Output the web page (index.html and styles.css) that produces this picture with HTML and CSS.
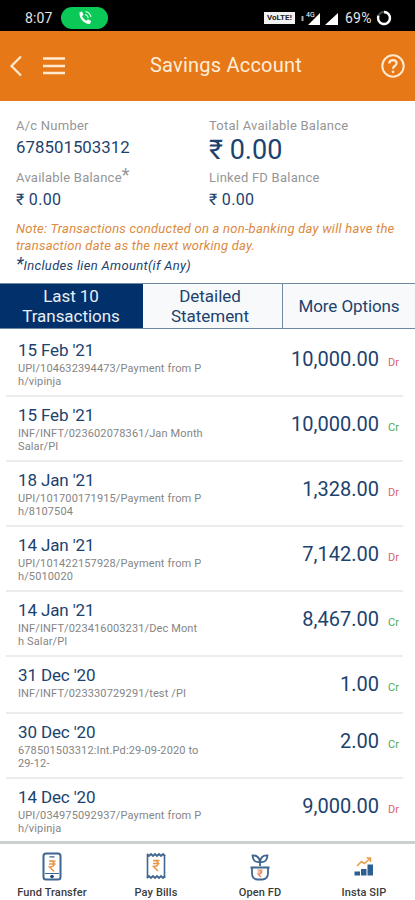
FILE: index.html
```html
<!DOCTYPE html>
<html lang="en">
<head>
<meta charset="utf-8">
<title>Savings Account</title>
<link rel="stylesheet" href="styles.css">
</head>
<body>
<div class="status">
  <span class="clock">8:07</span>
  <span class="call"><svg width="16" height="16" viewBox="0 0 16 16"><path d="M2.5 2.2 L5 1.5 L6.5 4.8 L5 6.2 Q6.5 9 9.4 10.7 L11 9.2 L14 10.9 L13.3 13.6 Q11 15 7 12 Q2 8 2.5 2.2Z" fill="#fff"/><path d="M8 4.5 Q10.5 5 11.3 8 M8.5 1.5 Q13 2.5 14 7" fill="none" stroke="#d8ffe4" stroke-width="1.2"/></svg></span>
  <span class="volte">VoLTE⁞</span>
  <svg class="signals" width="38" height="15" viewBox="0 0 38 15"><path d="M1.5 5v5" stroke="#aaa" stroke-width="2"/><path d="M19 2v12H7z M37 2v12H24z" fill="#fff"/><text x="5" y="6" font-size="7" fill="#fff">4G</text></svg>
  <span class="percent">69%</span>
  <svg class="battery" width="16" height="16" viewBox="0 0 16 16"><circle cx="8" cy="8" r="6" fill="none" stroke="#444" stroke-width="2.4"/><path d="M8 2a6 6 0 1 1-5.6 3.8" fill="none" stroke="#fff" stroke-width="2.4"/></svg>
</div>
<header class="header">
  <svg class="back" width="14" height="22" viewBox="0 0 14 22"><path d="M12 1.5 L2.5 11 L12 20.500" fill="none" stroke="#ffe9cf" stroke-width="2.2"/></svg>
  <svg class="menu" width="24" height="20" viewBox="0 0 24 20"><path d="M1 2.500h22M1 10h22M1 17h22" stroke="#ffe9cf" stroke-width="2.3"/></svg>
  <h1>Savings Account</h1>
  <svg class="help" width="26" height="26" viewBox="0 0 26 26"><circle cx="13" cy="13" r="10.700" fill="none" stroke="#ffe9cf" stroke-width="2"/><path d="M9.300 10.500 Q9.500 7.200 13 7.200 Q16.600 7.300 16.600 10.300 Q16.500 12 14.500 13.200 Q13 14.200 13 15.800" fill="none" stroke="#ffe9cf" stroke-width="2.300"/><circle cx="13" cy="18.800" r="1.400" fill="#ffe9cf"/></svg>
</header>
<section class="summary">
  <div class="balances">
    <div class="label">A/c Number</div><div class="label">Total Available Balance</div>
    <div class="value acct">678501503312</div><div class="value total">₹ 0.00</div>
    <div class="label">Available Balance<span class="star">*</span></div><div class="label">Linked FD Balance</div>
    <div class="value small">₹ 0.00</div><div class="value small">₹ 0.00</div>
  </div>
  <p class="note">Note: Transactions conducted on a non-banking day will have the<br>transaction date as the next working day.</p>
  <p class="lien"><span class="lien-star">*</span>Includes lien Amount(if Any)</p>
</section>
<nav class="tabs">
  <div class="tab active">Last 10<br>Transactions</div>
  <div class="tab">Detailed<br>Statement</div>
  <div class="tab single">More Options</div>
</nav>
<main class="list">
  <div class="row"><div class="info"><div class="date">15 Feb '21</div><div class="desc">UPI/104632394473/Payment from P<br>h/vipinja</div></div><div class="amount">10,000.00</div><div class="kind dr">Dr</div></div>
  <div class="row"><div class="info"><div class="date">15 Feb '21</div><div class="desc">INF/INFT/023602078361/Jan Month<br>Salar/PI</div></div><div class="amount">10,000.00</div><div class="kind cr">Cr</div></div>
  <div class="row"><div class="info"><div class="date">18 Jan '21</div><div class="desc">UPI/101700171915/Payment from P<br>h/8107504</div></div><div class="amount">1,328.00</div><div class="kind dr">Dr</div></div>
  <div class="row"><div class="info"><div class="date">14 Jan '21</div><div class="desc">UPI/101422157928/Payment from P<br>h/5010020</div></div><div class="amount">7,142.00</div><div class="kind dr">Dr</div></div>
  <div class="row"><div class="info"><div class="date">14 Jan '21</div><div class="desc">INF/INFT/023416003231/Dec Mont<br>h Salar/PI</div></div><div class="amount">8,467.00</div><div class="kind cr">Cr</div></div>
  <div class="row short"><div class="info"><div class="date">31 Dec '20</div><div class="desc">INF/INFT/023330729291/test /PI</div></div><div class="amount">1.00</div><div class="kind cr">Cr</div></div>
  <div class="row"><div class="info"><div class="date">30 Dec '20</div><div class="desc">678501503312:Int.Pd:29-09-2020 to<br>29-12-</div></div><div class="amount">2.00</div><div class="kind cr">Cr</div></div>
  <div class="row last"><div class="info"><div class="date">14 Dec '20</div><div class="desc">UPI/034975092937/Payment from P<br>h/vipinja</div></div><div class="amount">9,000.00</div><div class="kind dr">Dr</div></div>
</main>
<footer class="bottom">
  <div class="item"><svg width="30" height="32" viewBox="0 0 30 32"><rect x="6.500" y="2.500" width="17" height="26" rx="2.500" fill="#fff" stroke="#3f6690" stroke-width="2"/><path d="M12.500 5.800h5M8 22.500h14" stroke="#3f6690" stroke-width="1.200"/><circle cx="15" cy="25.500" r="1.800" fill="#1d4775"/><path d="M12 10h6.500M12 13h6.500M12.500 10q4.500 0 4.500 3t-4.500 3l4.500 4.500" fill="none" stroke="#ec9440" stroke-width="1.500"/></svg><span>Fund Transfer</span></div>
  <div class="item"><svg width="30" height="32" viewBox="0 0 30 32"><path d="M6.500 4v23M23.500 4v23" stroke="#3f6690" stroke-width="1.600"/><path d="M6 3l2 2 2-2 2 2 2-2 2 2 2-2 2 2 2-2 2 2M6 27l2-2 2 2 2-2 2 2 2-2 2 2 2-2 2 2 2-2" fill="none" stroke="#3f6690" stroke-width="1.800"/><path d="M12 9.500h6.500M12 12.500h6.500M12.500 9.500q4.500 0 4.500 3t-4.500 3l4.500 4.500" fill="none" stroke="#ec9440" stroke-width="1.500"/></svg><span>Pay Bills</span></div>
  <div class="item"><svg width="30" height="32" viewBox="0 0 30 32"><path d="M15 15V11Q8 12 7.500 4.500Q14 4 15 11Q16 4 22.500 4.500Q22 12 15 11M5.500 16.500h19M7 17v5q0 6 5.500 6.500h5q5.500-.5 5.500-6.500v-5" fill="none" stroke="#3f6690" stroke-width="1.800"/><path d="M12.500 19h5M12.500 21h5M13 19q3.500 0 3.500 2t-3.500 2l3 3" fill="none" stroke="#ec8350" stroke-width="1.200"/></svg><span>Open FD</span></div>
  <div class="item"><svg width="30" height="32" viewBox="0 0 30 32"><path d="M5.500 20.500h5.500v4H5.500zM12 18h5.500v6.500h-5.500zM18.500 13.500h5.500V24.500H18.500z" fill="#2d5f91"/><path d="M8 15l4.500-4.500 3 2 6-5.500M17.500 7h4v4" fill="none" stroke="#e9a04b" stroke-width="1.600"/></svg><span>Insta SIP</span></div>
</footer>
</body>
</html>
```

FILE: styles.css
```css
* { box-sizing: border-box; }
body { margin: 0; width: 415px; height: 900px; overflow: hidden; background: #fff; font-family: Roboto, "Liberation Sans", sans-serif; color: #1c426e; display: flex; flex-direction: column; }
h1, p { margin: 0; font-weight: 400; }
.status { height: 31px; flex: none; background: #000; color: #e4e4e4; display: flex; align-items: center; padding: 5px 24px 0 25px; }
.clock { width: 36px; font-size: 14px; letter-spacing: 0.1px; }
.call { width: 47px; height: 22px; border-radius: 11px; background: #0bc957; display: flex; align-items: center; justify-content: center; }
.volte { margin-left: 156px; width: 31px; height: 12px; background: #f2f2f2; color: #222; font-size: 8px; font-weight: 700; line-height: 12px; text-align: center; }
.signals { margin-left: 6px; }
.percent { margin-left: 6px; width: 31px; font-size: 14px; letter-spacing: 0.2px; }
.battery { flex: none; margin-right: -9px; }
.header { height: 70px; flex: none; background: #e67817; color: #ffedda; display: flex; align-items: center; padding: 0 9px; }
.header svg { flex: none; }
.menu { margin-left: 19px; }
.header h1 { flex: 1; padding: 0 0 2px 84px; font-size: 20px; letter-spacing: 0.22px; white-space: nowrap; }
.summary { height: 182px; flex: none; padding: 16px 0 0 16px; }
.balances { display: grid; grid-template-columns: 193px 1fr; grid-template-rows: 17px 35px 17px 26px; white-space: nowrap; }
.label { font-size: 13px; line-height: 17px; color: #969696; letter-spacing: 0.24px; }
.star { font-size: 18px; line-height: 0; vertical-align: 1px; }
.value.acct { font-size: 16.800px; line-height: 27px; letter-spacing: 0.05px; }
.value.total { font-size: 27px; line-height: 33px; }
.value.small { font-size: 16px; line-height: 27px; letter-spacing: 0.3px; }
.note { margin-top: 9px; font-size: 13px; line-height: 16.500px; font-style: italic; color: #dc8a3d; white-space: nowrap; letter-spacing: 0.24px; }
.lien { font-size: 13px; font-style: italic; line-height: 24px; letter-spacing: 0.32px; }
.lien-star { font-size: 18px; line-height: 0; letter-spacing: 0; }
.tabs { height: 46px; flex: none; display: grid; grid-template-columns: 143px 140px 132px; border-top: 1px solid #7189a5; border-bottom: 1px solid #7189a5; background: #f8f9fa; }
.tab { text-align: center; font-size: 17px; line-height: 20px; padding-top: 2px; border-right: 1px solid #7189a5; letter-spacing: -0.05px; }
.tab:nth-child(2) { padding-right: 5px; }
.tab.active { background: #02306a; color: #e8eef5; border-color: #02306a; }
.tab.single { border-right: 0; line-height: 40px; letter-spacing: -0.1px; }
.list { height: 512px; flex: none; padding: 3px 12px 0 6px; overflow: hidden; }
.row { height: 65px; display: flex; padding: 8px 4px 0 12px; border-bottom: 2px solid #ececee; }
.row.short { height: 57px; }
.row.last { border: 0; }
.info { flex: 1; }
.date { font-size: 17px; line-height: 20px; letter-spacing: -0.13px; }
.desc { font-size: 11px; line-height: 13px; color: #858585; white-space: nowrap; padding-top: 2px; letter-spacing: 0.13px; }
.amount { font-size: 20px; line-height: 38px; }
.kind { width: 20px; padding-left: 9px; font-size: 11px; line-height: 45px; }
.dr { color: #d96570; }
.cr { color: #4caa55; }
.bottom { flex: 1; border-top: 3px solid #cbcfd0; display: grid; grid-template-columns: repeat(4, 104px); padding-top: 7px; }
.item { display: flex; flex-direction: column; align-items: center; font-size: 11px; font-weight: 500; color: #3b3b3b; letter-spacing: 0.1px; }
.item span { line-height: 14px; margin-top: 3px; }
```
